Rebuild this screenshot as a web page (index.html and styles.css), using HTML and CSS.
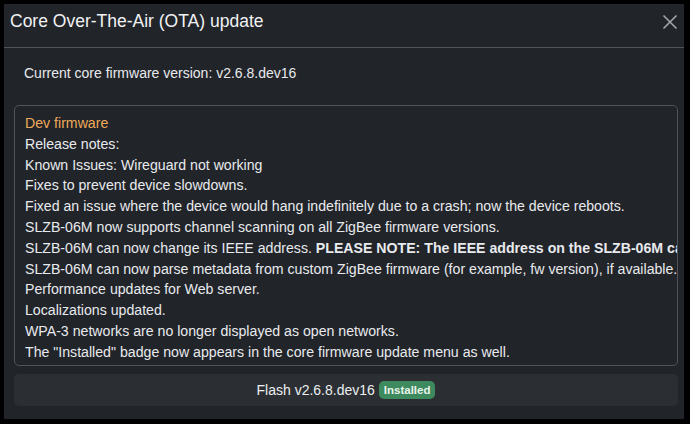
FILE: index.html
```html
<!DOCTYPE html>
<html lang="en">
<head>
    <meta charset="UTF-8">
    <meta name="viewport" content="width=device-width, initial-scale=1.0">
    <title>Core OTA update</title>
    <link rel="stylesheet" href="styles.css">
</head>
<body>
    <div class="modal">
        <div class="modal-header">
            <h1 class="modal-title">Core Over-The-Air (OTA) update</h1>
            <button class="close-btn" aria-label="Close">
                <svg width="16" height="16" viewBox="0 0 16 16">
                    <path d="M1.5 1.5 L14.5 14.5 M14.5 1.5 L1.5 14.5" stroke="currentColor" stroke-width="1.6" fill="none"/>
                </svg>
            </button>
        </div>
        <div class="modal-body">
            <p class="current">Current core firmware version: v2.6.8.dev16</p>
            <div class="notes">
                <div class="notes-title">Dev firmware</div>
                <div>Release notes:</div>
                <div>Known Issues: Wireguard not working</div>
                <div>Fixes to prevent device slowdowns.</div>
                <div>Fixed an issue where the device would hang indefinitely due to a crash; now the device reboots.</div>
                <div>SLZB-06M now supports channel scanning on all ZigBee firmware versions.</div>
                <div>SLZB-06M can now change its IEEE address. <b>PLEASE NOTE: The IEEE address on the SLZB-06M can only be changed once.</b></div>
                <div>SLZB-06M can now parse metadata from custom ZigBee firmware (for example, fw version), if available.</div>
                <div>Performance updates for Web server.</div>
                <div>Localizations updated.</div>
                <div>WPA-3 networks are no longer displayed as open networks.</div>
                <div>The "Installed" badge now appears in the core firmware update menu as well.</div>
            </div>
            <button class="flash-btn">Flash v2.6.8.dev16 <span class="badge">Installed</span></button>
        </div>
    </div>
</body>
</html>
```

FILE: styles.css
```css
body {
    margin: 0;
    padding: 4px 6px 5px 4px;
    background-color: #000;
    font-family: "Liberation Sans", Arial, sans-serif;
    color: #e8eaed;
}
.modal {
    height: 415px;
    background-color: #212429;
    box-sizing: border-box;
}
.modal-header {
    display: flex;
    align-items: center;
    justify-content: space-between;
    height: 31px;
    padding: 2px 6px 10px 6px;
    border-bottom: 1px solid #50545a;
}
.modal-title {
    margin: 0;
    font-size: 17.5px;
    font-weight: 400;
    color: #f1f2f4;
}
.close-btn {
    background: none;
    border: none;
    padding: 0;
    width: 16px;
    height: 16px;
    color: #a3a6ab;
    cursor: pointer;
}
.modal-body {
    padding: 0 6px 0 10px;
}
.current {
    margin: 0;
    padding: 15px 0 0 10px;
    height: 42px;
    font-size: 14px;
    line-height: 20px;
}
.notes {
    border: 1px solid #50545a;
    border-radius: 5px;
    padding: 7px 0 2px 10px;
    font-size: 14.15px;
    line-height: 20.8px;
    white-space: nowrap;
    overflow: hidden;
}
.notes-title {
    color: #eea95a;
}
.notes b {
    font-weight: 700;
}
.flash-btn {
    display: flex;
    align-items: center;
    justify-content: center;
    gap: 4px;
    width: 100%;
    height: 32px;
    margin-top: 8px;
    border: none;
    border-radius: 5px;
    background-color: #2b2e33;
    color: #eceef0;
    font-family: inherit;
    font-size: 14px;
    cursor: pointer;
}
.badge {
    background-color: #3d8a5e;
    color: #eaf3ec;
    font-size: 11.5px;
    font-weight: 700;
    padding: 3px 5px;
    border-radius: 5px;
}
```
